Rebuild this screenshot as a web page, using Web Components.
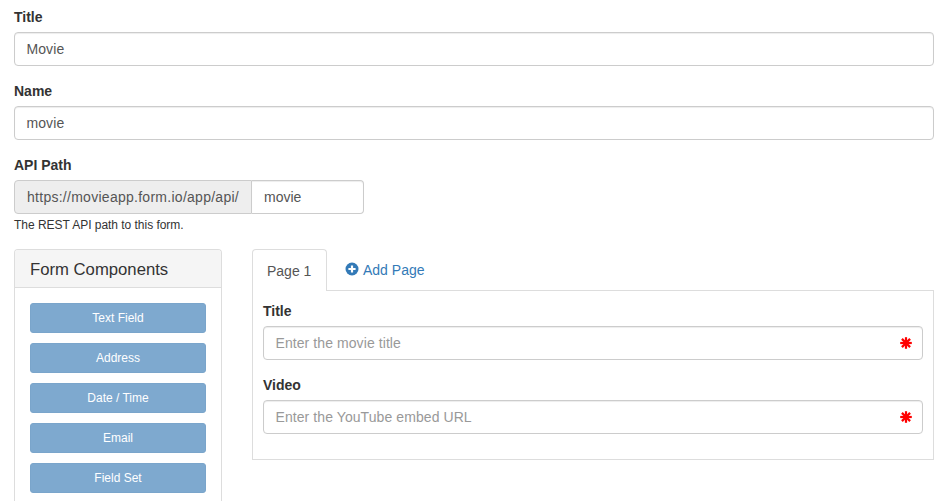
<!DOCTYPE html>
<html>
<head>
<meta charset="utf-8">
<title>Form</title>
<style>
  html, body { margin: 0; height: 100%; overflow: hidden; background: #fff; }
  body { font-family: "Liberation Sans", Arial, sans-serif; font-size: 14px; line-height: 20px; color: #333; }
</style>
</head>
<body>
<form-editor></form-editor>

<script>
const TEXTO_BASE = `font-family: "Liberation Sans", Arial, sans-serif; font-size: 14px;`;

class FormField extends HTMLElement {
  constructor() {
    super();
    this.attachShadow({ mode: 'open' });
  }

  connectedCallback() {
    const value = this.getAttribute('value');
    const placeholder = this.getAttribute('placeholder');
    const required = this.hasAttribute('required');

    this.shadowRoot.innerHTML = `
      <style>
        :host { display: block; margin-bottom: 15px; }
        label { display: block; height: 20px; line-height: 20px; margin-bottom: 5px; font-weight: 700; color: #333; ${TEXTO_BASE} }
        .control {
          box-sizing: border-box; height: 34px; padding: 6px 12px 6px 11.5px;
          display: flex; align-items: center; justify-content: space-between;
          background: #fff; border: 1px solid #ccc; border-radius: 4px;
          box-shadow: inset 0 1px 1px rgba(0,0,0,.075);
          color: #555; line-height: 20px; letter-spacing: .08px; ${TEXTO_BASE}
        }
        .placeholder { color: #999; }
        svg { display: block; margin-right: -3px; }
      </style>
      <label>${this.getAttribute('label')}</label>
      <div class="control">
        <span class="${value ? '' : 'placeholder'}">${value || placeholder}</span>
        ${required ? `
          <svg width="14" height="14" viewBox="0 0 14 14" aria-hidden="true">
            <g stroke="#f00" stroke-width="2.2" stroke-linecap="butt">
              <line x1="7" y1="1.2" x2="7" y2="12.8"/>
              <line x1="1.2" y1="7" x2="12.8" y2="7"/>
              <line x1="2.9" y1="2.9" x2="11.1" y2="11.1"/>
              <line x1="11.1" y1="2.9" x2="2.9" y2="11.1"/>
            </g>
          </svg>` : ''}
      </div>
    `;
  }
}

class ApiPath extends HTMLElement {
  constructor() {
    super();
    this.attachShadow({ mode: 'open' });
    this.shadowRoot.innerHTML = `
      <style>
        :host { display: block; ${TEXTO_BASE} }
        label { display: block; height: 20px; line-height: 20px; margin-bottom: 5px; font-weight: 700; color: #333; }
        .group { display: flex; width: 350px; height: 34px; box-sizing: border-box; color: #555; line-height: 20px; }
        .addon {
          box-sizing: border-box; width: 238px; flex: none; padding: 6px 12px; white-space: nowrap;
          background: #eee; border: 1px solid #ccc; border-radius: 4px 0 0 4px; letter-spacing: .27px;
        }
        .input {
          flex: 1; padding: 6px 12px; border: 1px solid #ccc; border-left: 0;
          border-radius: 0 4px 4px 0; box-shadow: inset 0 1px 1px rgba(0,0,0,.075);
        }
        .help { margin-top: 3px; height: 17px; line-height: 17px; font-size: 12px; letter-spacing: -.03px; color: #333; }
      </style>
      <label>API Path</label>
      <div class="group">
        <div class="addon">https://movieapp.form.io/app/api/</div>
        <div class="input">movie</div>
      </div>
      <div class="help">The REST API path to this form.</div>
    `;
  }
}

class ComponentPanel extends HTMLElement {
  constructor() {
    super();
    this.attachShadow({ mode: 'open' });
    this.shadowRoot.innerHTML = `
      <style>
        :host {
          display: block; box-sizing: border-box; width: 208px; flex: none; height: 270px;
          border: 1px solid #ddd; border-bottom: 0; border-radius: 4px 4px 0 0; ${TEXTO_BASE}
        }
        h3 {
          margin: 0; height: 38px; box-sizing: border-box; padding: 10px 15px 8px;
          background: #f5f5f5; border-bottom: 1px solid #ddd; border-radius: 3px 3px 0 0;
          font-size: 16.7px; font-weight: 400; line-height: 20px; color: #333; white-space: nowrap;
        }
        .lista { display: flex; flex-direction: column; gap: 10px; padding: 15px; }
      </style>
      <h3>Form Components</h3>
      <div class="lista"><slot></slot></div>
    `;
  }
}

class ComponentButton extends HTMLElement {
  constructor() {
    super();
    this.attachShadow({ mode: 'open' });
    this.shadowRoot.innerHTML = `
      <style>
        :host {
          display: block; box-sizing: border-box; height: 30px; text-align: center;
          background: #7ea9cf; border: 1px solid #7aa5cb; border-radius: 3px;
          color: #fff; font-family: "Liberation Sans", Arial, sans-serif; font-size: 12px; line-height: 28px;
        }
      </style>
      <slot></slot>
    `;
  }
}

class PageTabs extends HTMLElement {
  constructor() {
    super();
    this.attachShadow({ mode: 'open' });
    this.shadowRoot.innerHTML = `
      <style>
        :host { display: block; flex: 1; min-width: 0; ${TEXTO_BASE} }
        .tabs { display: flex; height: 42px; box-sizing: border-box; border-bottom: 1px solid #ddd; }
        .tab { box-sizing: border-box; height: 42px; padding: 11px 14px 9px; line-height: 20px; white-space: nowrap; }
        .activa {
          width: 75px; color: #555; background: #fff;
          border: 1px solid #ddd; border-bottom: 0; border-radius: 4px 4px 0 0;
        }
        .agregar { margin-left: 4px; display: flex; align-items: flex-start; gap: 4px; color: #337ab7; }
        .agregar svg { flex: none; margin-top: 2px; }
        .contenido { box-sizing: border-box; height: 169px; padding: 10px 10px 0; border: 1px solid #ddd; border-top: 0; }
      </style>
      <div class="tabs">
        <div class="tab activa">Page 1</div>
        <div class="tab agregar">
          <svg width="14" height="14" viewBox="0 0 14 14" aria-hidden="true">
            <circle cx="7" cy="7" r="6.5" fill="#337ab7"/>
            <path d="M7 3.4v7.2M3.4 7h7.2" stroke="#fff" stroke-width="2.2"/>
          </svg>
          <span>Add Page</span>
        </div>
      </div>
      <div class="contenido"><slot></slot></div>
    `;
  }
}

class FormEditor extends HTMLElement {
  constructor() {
    super();
    this.attachShadow({ mode: 'open' });
    this.shadowRoot.innerHTML = `
      <style>
        :host { display: block; box-sizing: border-box; width: 941px; padding: 7px 7px 0 14px; }
        .columnas { display: flex; gap: 30px; margin-top: 15px; }
      </style>
      <form-field label="Title" value="Movie"></form-field>
      <form-field label="Name" value="movie"></form-field>
      <api-path></api-path>
      <div class="columnas">
        <component-panel>
          <component-button>Text Field</component-button>
          <component-button>Address</component-button>
          <component-button>Date / Time</component-button>
          <component-button>Email</component-button>
          <component-button>Field Set</component-button>
        </component-panel>
        <page-tabs>
          <form-field label="Title" placeholder="Enter the movie title" required></form-field>
          <form-field label="Video" placeholder="Enter the YouTube embed URL" required></form-field>
        </page-tabs>
      </div>
    `;
  }
}

customElements.define('form-field', FormField);
customElements.define('api-path', ApiPath);
customElements.define('component-button', ComponentButton);
customElements.define('component-panel', ComponentPanel);
customElements.define('page-tabs', PageTabs);
customElements.define('form-editor', FormEditor);
</script>
</body>
</html>
